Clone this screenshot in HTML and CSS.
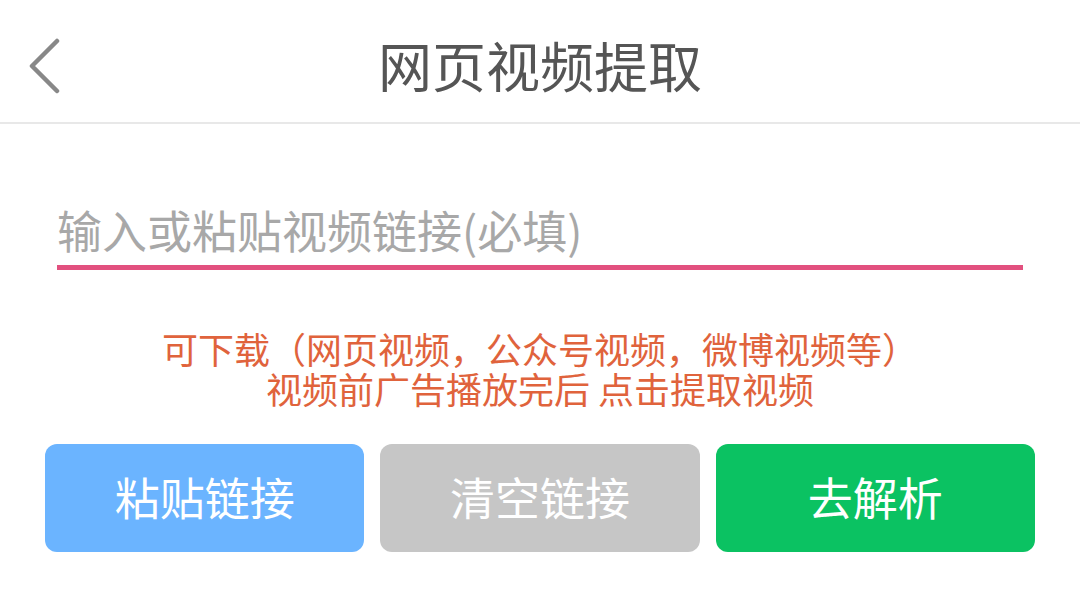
FILE: index.html
```html
<!DOCTYPE html>
<html lang="zh">
<head>
<meta charset="utf-8">
<link rel="stylesheet" href="styles.css">
</head>
<body>
<div class="page">
  <header class="header">
    <button class="back" aria-label="返回">
      <svg width="34" height="56" viewBox="0 0 34 56"><path d="M29 3 L4 28 L29 53" fill="none" stroke="#888" stroke-width="4.5" stroke-linecap="round" stroke-linejoin="round"/></svg>
    </button>
    <h1 class="title">网页视频提取</h1>
  </header>
  <main class="main">
    <div class="field">
      <input class="input" type="text" placeholder="输入或粘贴视频链接(必填)">
    </div>
    <div class="tip">
      <span class="tip-line">可下载（网页视频，公众号视频，微博视频等）</span>
      <span class="tip-line">视频前广告播放完后 点击提取视频</span>
    </div>
    <div class="actions">
      <button class="btn btn-blue">粘贴链接</button>
      <button class="btn btn-gray">清空链接</button>
      <button class="btn btn-green">去解析</button>
    </div>
  </main>
</div>
</body>
</html>
```
FILE: styles.css
```css
* { box-sizing: border-box; }
html, body { margin: 0; padding: 0; background: #fff; }
body { font-family: "Noto Sans CJK SC", "Noto Sans", sans-serif; width: 1080px; height: 589px; overflow: hidden; }
.header {
  position: relative;
  height: 124px;
  border-bottom: 2px solid #e8e8e8;
  display: flex;
  align-items: center;
  justify-content: center;
}
.back {
  position: absolute;
  left: 28px;
  top: 38px;
  border: 0;
  background: none;
  padding: 0;
  display: flex;
}
.title {
  margin: 0;
  font-size: 54px;
  font-weight: 400;
  color: #555;
  line-height: 1;
  padding-top: 8px;
}
.main { padding: 0 45px; }
.field { padding: 80px 12px 0 12px; }
.input {
  width: 100%;
  border: 0;
  border-bottom: 5px solid #e2507f;
  outline: none;
  font-family: inherit;
  font-size: 45px;
  padding: 0 0 10px 0;
  height: 66px;
  color: #333;
  background: transparent;
}
.input::placeholder { color: #a8a8a8; }
.tip {
  margin: 58px 0 0 0;
  display: flex;
  flex-direction: column;
  align-items: center;
  color: #e0633c;
  font-size: 36px;
  line-height: 40px;
}
.tip-line { display: block; white-space: nowrap; }
.actions {
  margin-top: 36px;
  display: grid;
  grid-template-columns: repeat(3, 1fr);
  gap: 16px;
  width: 990px;
}
.btn {
  height: 108px;
  border: 0;
  border-radius: 12px;
  color: #fff;
  font-family: inherit;
  font-size: 45px;
  padding: 0 0 4px 0;
}
.btn-blue { background: #6bb4ff; }
.btn-gray { background: #c6c6c6; }
.btn-green { background: #0bc262; }
```
